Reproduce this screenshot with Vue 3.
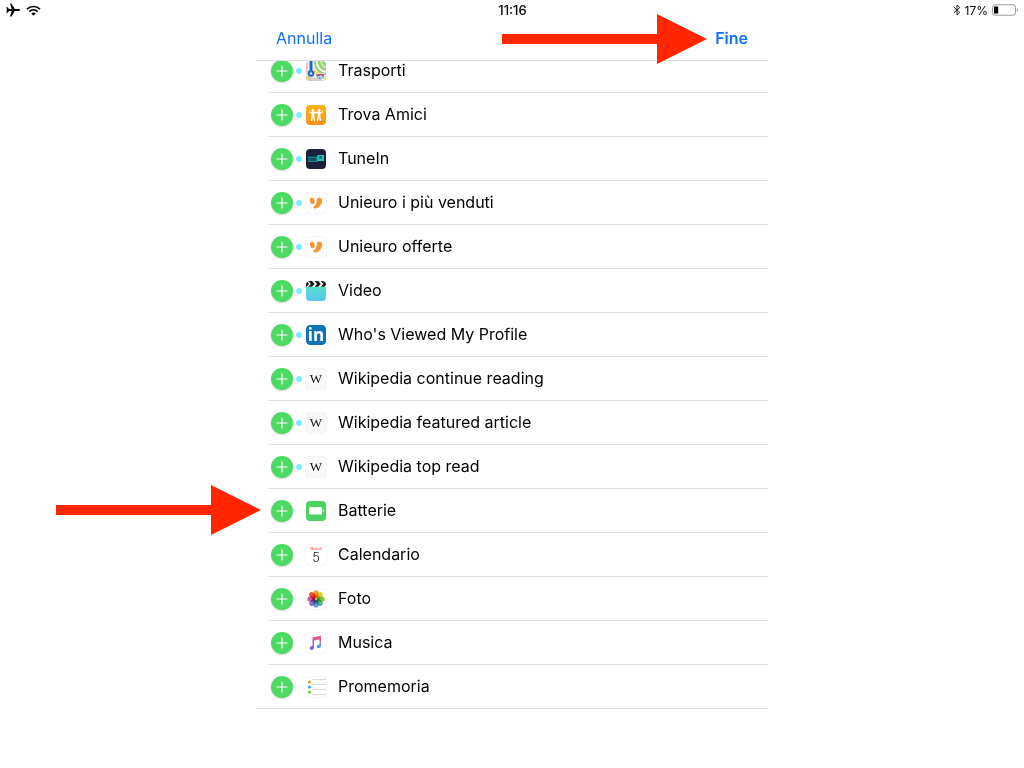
<script setup>
const widgets = [
  { name: 'Trasporti', icon: 'maps', isNew: true },
  { name: 'Trova Amici', icon: 'friends', isNew: true },
  { name: 'TuneIn', icon: 'tunein', isNew: true },
  { name: 'Unieuro i più venduti', icon: 'unieuro', isNew: true },
  { name: 'Unieuro offerte', icon: 'unieuro', isNew: true },
  { name: 'Video', icon: 'video', isNew: true },
  { name: "Who's Viewed My Profile", icon: 'linkedin', isNew: true },
  { name: 'Wikipedia continue reading', icon: 'wikipedia', isNew: true },
  { name: 'Wikipedia featured article', icon: 'wikipedia', isNew: true },
  { name: 'Wikipedia top read', icon: 'wikipedia', isNew: true },
  { name: 'Batterie', icon: 'battery', isNew: false },
  { name: 'Calendario', icon: 'calendar', isNew: false },
  { name: 'Foto', icon: 'photos', isNew: false },
  { name: 'Musica', icon: 'music', isNew: false },
  { name: 'Promemoria', icon: 'reminders', isNew: false },
]
const petals = ['#f7a01c', '#dfd129', '#8cc63f', '#4fb991', '#5b9fd8', '#8c74bd', '#d25c9b', '#ee4b3a']
</script>

<template>
  <div class="screen">
    <header class="status">
      <div class="status-left">
        <svg width="14" height="14" viewBox="0 0 14 14" aria-label="Modalità aereo">
          <path d="M14 7c0-.8-.8-1.100-1.700-1.100H8.800L5.500.5H4L5.600 5.900H3L1.600 4.200H.3L1 7 .3 9.800h1.300L3 8.100h2.600L4 13.500h1.500l3.300-5.400h3.500c.9 0 1.700-.3 1.700-1.100z" fill="#000" />
        </svg>
        <svg width="15" height="11" viewBox="0 0 15 11" aria-label="Wi-Fi">
          <path d="M1 4.200C4.700.6 10.300.6 14 4.200M3.300 6.600c2.400-2.200 6-2.200 8.400 0" fill="none" stroke="#000" stroke-width="1.700" />
          <path d="M5.300 8.400c1.300-1.100 3.100-1.100 4.400 0L7.500 10.700z" fill="#000" />
        </svg>
      </div>
      <time class="clock">11:16</time>
      <div class="status-right">
        <svg width="8" height="12" viewBox="0 0 8 12" aria-label="Bluetooth">
          <path d="M1 3.300 6.800 8.500 4 11V1l2.800 2.500L1 8.700" fill="none" stroke="#222" stroke-width="1" />
        </svg>
        <span>17%</span>
        <svg width="27" height="12" viewBox="0 0 27 12" aria-label="Batteria">
          <rect x=".5" y=".8" width="23" height="10.400" rx="2.500" fill="#fff" stroke="#999" />
          <rect x="2" y="2.500" width="4.200" height="7" rx=".6" fill="#000" />
          <path d="M25 4.200c1.400.5 1.400 3.100 0 3.600z" fill="#999" />
        </svg>
      </div>
    </header>

    <main class="panel">
      <nav class="toolbar">
        <button type="button" class="action">Annulla</button>
        <button type="button" class="action done">Fine</button>
      </nav>

      <div class="viewport">
        <ul class="list">
          <li v-for="w in widgets" :key="w.name" class="row">
            <button type="button" class="add" :aria-label="'Aggiungi ' + w.name">
              <svg width="22" height="22" viewBox="0 0 22 22">
                <path d="M11 5.500v11M5.500 11h11" stroke="#fff" stroke-width="1.200" />
              </svg>
            </button>
            <span class="dot" :class="{ shown: w.isNew }"></span>
            <span class="icon" :class="w.icon">
              <svg v-if="w.icon === 'maps'" width="20" height="20" viewBox="0 0 20 20">
                <rect width="20" height="20" fill="#eee9de" />
                <path d="M8 0h12v14C13 13 8 8 8 0z" fill="#8fd36e" />
                <path d="M10.500 0C11 6 14.500 10 20 11" fill="none" stroke="#fff" stroke-width="2" />
                <path d="M15 0c.5 3.500 2 5.500 5 6.500" fill="none" stroke="#c6e9b2" stroke-width="2" />
                <path d="M0 0h2v10l-2 2z" fill="#f2bcc8" />
                <path d="M0 15 20 20H0z" fill="#d2ccc6" />
                <path d="M0 19 9 10l11 8" fill="none" stroke="#fbd34b" stroke-width="2" />
                <path d="M5 0v11" stroke="#fff" stroke-width="5" />
                <path d="M5 0v12" stroke="#1769d2" stroke-width="3" />
                <circle cx="5" cy="12.500" r="3.300" fill="#1769d2" />
                <path d="M5 10.200 6.600 14 5 13.300 3.400 14z" fill="#fff" />
                <path d="M10.300 12.500q2 1 4-.5 2 1.500 4 .5c1 3-1 5.700-4 6.500-3-.8-5-3.500-4-6.500z" fill="#6593d2" stroke="#fff" stroke-width=".7" />
                <path d="M10.500 13.700h7.600" stroke="#e34d48" stroke-width="1.400" />
                <path d="M12.500 15v2M14 15h2v2h-2z" fill="none" stroke="#fff" stroke-width=".7" />
              </svg>
              <svg v-else-if="w.icon === 'friends'" width="20" height="20" viewBox="0 0 20 20">
                <defs>
                  <linearGradient id="friends-fill" x1="0" y1="0" x2="0" y2="1">
                    <stop offset="0" stop-color="#fdb714" /><stop offset="1" stop-color="#fa9115" />
                  </linearGradient>
                </defs>
                <rect width="20" height="20" fill="url(#friends-fill)" />
                <circle cx="7" cy="5.400" r="1.500" fill="#fff" />
                <circle cx="13" cy="5.400" r="1.500" fill="#fff" />
                <path d="M5.300 7.200h3.400L8.200 11.500H5.800zM11.300 7.200h3.400l-.5 4.300h-2.400z" fill="#fff" />
                <path d="M3 6.500 5.700 8h2.600L10 7.200l1.700.8h2.600L17 6.500M6.600 10.500 5.400 16M7.400 10.500 8.600 16M12.600 10.500 11.400 16M13.400 10.500 14.600 16" fill="none" stroke="#fff" stroke-width="1.300" />
              </svg>
              <svg v-else-if="w.icon === 'tunein'" width="20" height="20" viewBox="0 0 20 20">
                <rect width="20" height="20" fill="#1c203c" />
                <rect x="2" y="7.500" width="10" height="5.500" fill="#147f84" />
                <rect x="11.500" y="6" width="6.500" height="6" fill="#20c5bd" />
                <text x="2" y="11.500" class="tune" fill="#1c203c">TUNE</text>
                <text x="13" y="10" class="tune" fill="#1c203c">IN</text>
              </svg>
              <svg v-else-if="w.icon === 'unieuro'" width="20" height="20" viewBox="0 0 20 20">
                <rect width="20" height="20" fill="#fff" />
                <ellipse cx="6.300" cy="7.900" rx="2.300" ry="3.300" transform="rotate(-15 6.300 7.900)" fill="#f79631" />
                <path d="M11.300 5.500c.8-1.700 4.700-1.600 4.800 1.700.1 4.600-3.700 8.300-7.200 8.300-1.700 0-2-1.500-.6-2.500 3.200-2.300 1.900-5.200 3-7.500z" fill="#f79631" />
              </svg>
              <svg v-else-if="w.icon === 'video'" width="20" height="20" viewBox="0 0 20 20">
                <defs>
                  <linearGradient id="video-fill" x1="0" y1="0" x2="0" y2="1">
                    <stop offset="0" stop-color="#54dfca" /><stop offset="1" stop-color="#58c6f0" />
                  </linearGradient>
                </defs>
                <rect width="20" height="20" fill="#fff" />
                <rect y="6" width="20" height="14" fill="url(#video-fill)" />
                <path d="M0 0h.5L3 2.900.5 5.800H0zM2.200 0H6l2.700 2.900L6 5.800H2.200l2.700-2.900zM8.400 0h3.800l2.700 2.900-2.700 2.900H8.400l2.700-2.900zM14.600 0h3.800L20 1.800v2.200l-1.600 1.800h-3.800l2.700-2.900z" fill="#1c1c1c" />
              </svg>
              <svg v-else-if="w.icon === 'linkedin'" width="20" height="20" viewBox="0 0 20 20">
                <rect width="20" height="20" rx="4" fill="#0f74b3" />
                <text x="10" y="16" text-anchor="middle" class="linked" fill="#fff">in</text>
              </svg>
              <svg v-else-if="w.icon === 'wikipedia'" width="20" height="20" viewBox="0 0 20 20">
                <rect width="20" height="20" fill="#f8fafa" />
                <text x="10" y="14" text-anchor="middle" class="wiki" fill="#111">W</text>
              </svg>
              <svg v-else-if="w.icon === 'battery'" width="20" height="20" viewBox="0 0 20 20">
                <rect width="20" height="20" fill="#4cd263" />
                <rect x="3" y="6" width="13" height="7.500" rx="1" fill="#fff" />
                <path d="M16.700 8c1.500.4 1.500 3 0 3.500z" fill="#fff" />
              </svg>
              <svg v-else-if="w.icon === 'calendar'" width="20" height="20" viewBox="0 0 20 20">
                <rect width="20" height="20" fill="#fff" />
                <text x="10" y="5" text-anchor="middle" class="weekday" fill="#ff4b42">Martedì</text>
                <text x="10" y="17" text-anchor="middle" class="day" fill="#222">5</text>
              </svg>
              <svg v-else-if="w.icon === 'photos'" width="20" height="20" viewBox="0 0 20 20">
                <rect width="20" height="20" fill="#fff" />
                <g class="petals">
                  <rect v-for="(c, i) in petals" :key="c" x="7.400" y="1.300" width="5.200" height="8" rx="2.600" :fill="c" :transform="`rotate(${i * 45} 10 10)`" />
                </g>
              </svg>
              <svg v-else-if="w.icon === 'music'" width="20" height="20" viewBox="0 0 20 20">
                <defs>
                  <linearGradient id="music-fill" x1="1" y1="0" x2=".2" y2="1">
                    <stop offset="0" stop-color="#fb4d67" /><stop offset=".4" stop-color="#e0559c" /><stop offset="1" stop-color="#755cf0" />
                  </linearGradient>
                  <linearGradient id="music-stem" x1="0" y1="0" x2="0" y2="1">
                    <stop offset="0" stop-color="#fb4d67" /><stop offset="1" stop-color="#3d9df0" />
                  </linearGradient>
                </defs>
                <rect width="20" height="20" fill="#fff" />
                <path d="M6.500 4.500 15 2.800V6L8 7.500v7c0 2.900-4.300 3.400-4.300.8 0-1.700 1.500-1.900 2.800-2.200z" fill="url(#music-fill)" />
                <path d="M13.500 3.100 15 2.800v10c0 2.800-4.300 3.200-4.300.7 0-1.600 1.500-1.800 2.800-2.100z" fill="url(#music-stem)" />
              </svg>
              <svg v-else width="20" height="20" viewBox="0 0 20 20">
                <rect width="20" height="20" fill="#fff" />
                <path d="M6.500 2.500H20M6.500 7.500H20M6.500 12.500H20M6.500 17.500H20" stroke="#d4d4d4" stroke-width=".8" />
                <circle cx="3.500" cy="5" r="1.600" fill="#fb921e" />
                <circle cx="3.500" cy="10" r="1.600" fill="#2da5f4" />
                <circle cx="3.500" cy="15" r="1.600" fill="#63cb37" />
              </svg>
            </span>
            <span class="name">{{ w.name }}</span>
          </li>
        </ul>
      </div>

      <svg class="arrow arrow-done" width="205" height="50" viewBox="0 0 205 50" aria-hidden="true">
        <path d="M0 20h155V0l50 25-50 25V30H0z" fill="#ff2600" />
      </svg>
      <svg class="arrow arrow-battery" width="205" height="50" viewBox="0 0 205 50" aria-hidden="true">
        <path d="M0 20h155V0l50 25-50 25V30H0z" fill="#ff2600" />
      </svg>
    </main>
  </div>
</template>

<style>
body {
  margin: 0;
  background: #fff;
}
</style>

<style scoped>
.screen {
  min-height: 100vh;
  background: #fff;
  color: #000;
  font-family: Inter, "Liberation Sans", sans-serif;
}
.status {
  display: grid;
  grid-template-columns: 1fr auto 1fr;
  align-items: center;
  height: 20px;
  padding: 0 5px 0 6px;
  font-size: 12px;
}
.status-left,
.status-right {
  display: flex;
  align-items: center;
  gap: 6px;
}
.status-right {
  justify-content: flex-end;
  gap: 4px;
}
.clock {
  font-size: 13px;
  font-weight: 500;
}
.panel {
  position: relative;
  width: 50%;
  min-width: 320px;
  margin: 0 auto;
}
.toolbar {
  display: flex;
  justify-content: space-between;
  align-items: center;
  height: 40px;
  padding: 0 20px;
  border-bottom: 1px solid #dcdcdc;
}
.action {
  margin: 0;
  padding: 0 0 4px;
  border: 0;
  background: none;
  color: #0f6fff;
  font: 400 16px/20px Inter, "Liberation Sans", sans-serif;
}
.done {
  font-weight: 600;
}
.viewport {
  overflow: hidden;
}
.list {
  margin: -12px 0 0;
  padding: 0;
  list-style: none;
}
.row {
  display: flex;
  align-items: center;
  box-sizing: border-box;
  height: 44px;
  margin-left: 12px;
  padding-left: 3px;
  border-bottom: 1px solid #e2e2e2;
}
.row:last-child {
  margin-left: 0;
  padding-left: 15px;
}
.add {
  width: 22px;
  height: 22px;
  margin: 1px 0 0;
  padding: 0;
  border: 0;
  border-radius: 50%;
  background: #4cd964;
  box-shadow: 0 1px 2px rgba(0, 0, 0, 0.16);
}
.add svg,
.icon svg {
  display: block;
}
.dot {
  width: 6px;
  height: 6px;
  margin: 0 4px 0 3px;
  border-radius: 50%;
}
.dot.shown {
  background: #80eafe;
}
.icon {
  width: 20px;
  height: 20px;
  margin-right: 12px;
  border-radius: 4px;
  overflow: hidden;
}
.unieuro,
.wikipedia,
.calendar,
.photos,
.music,
.reminders {
  box-shadow: 0 0 1px 0 rgba(0, 0, 0, 0.4);
}
.name {
  padding-bottom: 2px;
  font-size: 16px;
  line-height: 20px;
}
.petals rect {
  mix-blend-mode: multiply;
}
.tune {
  font: 700 3px Inter, sans-serif;
}
.linked {
  font: 700 17px "Open Sans", sans-serif;
}
.wiki {
  font: 400 13px "Liberation Serif", serif;
}
.weekday {
  font: 500 3px Inter, sans-serif;
}
.day {
  font: 300 13px Inter, sans-serif;
}
.arrow {
  position: absolute;
}
.arrow-done {
  top: -6px;
  right: 61px;
}
.arrow-battery {
  top: 465px;
  left: -200px;
}
</style>
